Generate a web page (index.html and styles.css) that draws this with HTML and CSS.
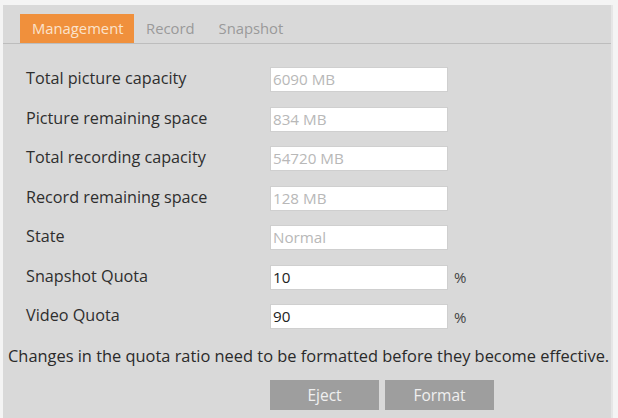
FILE: index.html
```html
<!DOCTYPE html>
<html>
<head>
<meta charset="utf-8">
<link rel="stylesheet" href="styles.css">
</head>
<body>
<div class="panel">
  <div class="tabs">
    <div class="tab active">Management</div>
    <div class="tab">Record</div>
    <div class="tab">Snapshot</div>
  </div>
  <div class="form">
    <div class="row"><span class="label">Total picture capacity</span><span class="field ro">6090 MB</span></div>
    <div class="row"><span class="label">Picture remaining space</span><span class="field ro">834 MB</span></div>
    <div class="row"><span class="label">Total recording capacity</span><span class="field ro">54720 MB</span></div>
    <div class="row"><span class="label">Record remaining space</span><span class="field ro">128 MB</span></div>
    <div class="row"><span class="label">State</span><span class="field ro">Normal</span></div>
    <div class="row"><span class="label">Snapshot Quota</span><span class="field">10</span><span class="unit">%</span></div>
    <div class="row"><span class="label">Video Quota</span><span class="field">90</span><span class="unit">%</span></div>
  </div>
  <p class="notice">Changes in the quota ratio need to be formatted before they become effective.</p>
  <div class="actions">
    <button class="btn">Eject</button>
    <button class="btn">Format</button>
  </div>
</div>
</body>
</html>
```
FILE: styles.css
```css
html, body {
  margin: 0;
  padding: 0;
  background: #f4f4f4;
  width: 618px;
  height: 418px;
  overflow: hidden;
}
body {
  font-family: "Open Sans", "Noto Sans", sans-serif;
  color: #333;
}
.panel {
  margin: 5px 5px 0 3px;
  height: 413px;
  background: #d9d9d9;
  border-right: 2px solid #e6e6e6;
  box-sizing: border-box;
}
.tabs {
  display: flex;
  align-items: flex-end;
  height: 38px;
  padding-left: 17px;
  border-bottom: 1px solid #bdbdbd;
}
.tab {
  height: 29px;
  line-height: 29px;
  padding: 0 12px;
  font-size: 14.8px;
  color: #9a9a9a;
}
.tab.active {
  background: #f0903c;
  color: #fbe3cc;
  width: 114px;
  box-sizing: border-box;
  padding: 0 12px;
}
.form {
  display: flex;
  flex-direction: column;
  gap: 14.5px;
  padding: 23px 0 0 23px;
}
.row {
  display: flex;
  align-items: center;
  height: 25px;
}
.label {
  width: 244px;
  font-size: 16.2px;
  line-height: 20px;
  color: #2e2e2e;
  margin-top: -3px;
}
.field {
  width: 178px;
  height: 25px;
  box-sizing: border-box;
  background: #fff;
  border: 1px solid #cfcfcf;
  padding-left: 2px;
  font-size: 15.2px;
  line-height: 23px;
  color: #222;
}
.field.ro {
  color: #b8b8b8;
}
.unit {
  margin-left: 6px;
  font-size: 15px;
  color: #444;
}
.notice {
  margin: 16px 0 0 5px;
  font-size: 16.4px;
  line-height: 22px;
  color: #2a2a2a;
  white-space: nowrap;
}
.actions {
  display: flex;
  gap: 6px;
  padding-left: 267px;
  margin-top: 13px;
}
.btn {
  width: 109px;
  height: 30px;
  border: none;
  background: #9e9e9e;
  color: #f0f0f0;
  font-family: "Open Sans", "Noto Sans", sans-serif;
  font-size: 15.5px;
  padding: 0;
}
```
